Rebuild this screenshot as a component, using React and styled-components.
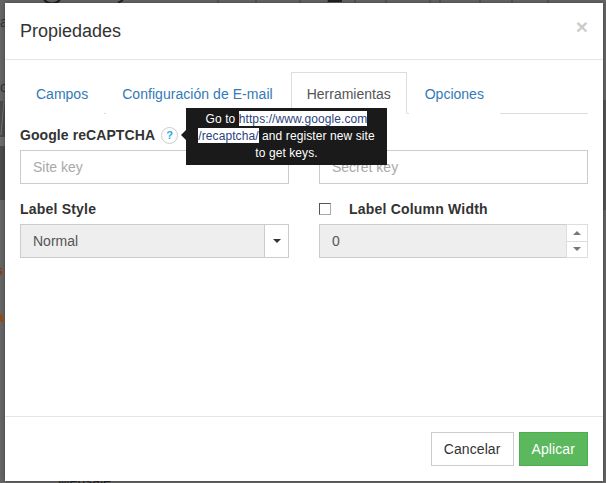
import React from "react";
import styled, { createGlobalStyle } from "styled-components";

const Global = createGlobalStyle`
  html, body { margin: 0; padding: 0; background: #666; }
  body { font-family: "Liberation Sans", Arial, sans-serif; font-size: 14px; color: #333; }
  * { box-sizing: border-box; }
`;

const Backdrop = styled.div`
  position: relative;
  width: 606px;
  height: 483px;
  overflow: hidden;
  padding: 3px 3px 2px 5px;
  background: #666;
`;

const BehindDrawing = styled.svg`
  position: absolute;
  left: 0;
  top: 0;
  width: 606px;
  height: 483px;
`;

const BehindText = styled.span`
  position: absolute;
  left: ${(p) => p.$x}px;
  top: ${(p) => p.$y}px;
  color: ${(p) => p.$color};
  font-size: 14px;
  font-weight: ${(p) => (p.$bold ? 700 : 400)};
  line-height: 16px;
`;

const Modal = styled.div`
  position: relative;
  width: 598px;
  height: 478px;
  display: flex;
  flex-direction: column;
  background: #fff;
  box-shadow: 0 0 5px rgba(0, 0, 0, 0.35);
`;

const Header = styled.div`
  height: 57px;
  flex: none;
  display: flex;
  align-items: center;
  justify-content: space-between;
  padding: 0 15px;
  border-bottom: 1px solid #e5e5e5;
`;

const Title = styled.h4`
  margin: 0;
  font-size: 18px;
  font-weight: 400;
  line-height: 20px;
  color: #333;
`;

const Close = styled.span`
  font-size: 21px;
  font-weight: 700;
  line-height: 1;
  color: #000;
  opacity: 0.2;
  margin: -10px 0 0;
`;

const Body = styled.div`
  flex: 1;
  padding: 12px 15px 0;
`;

const Tabs = styled.div`
  display: flex;
  height: 42px;
  border-bottom: 1px solid #ddd;
`;

const Tab = styled.div`
  height: 42px;
  padding: 0 15px;
  margin-right: 2px;
  line-height: 42px;
  letter-spacing: ${(p) => (p.$wide ? "0.05px" : "0")};
  color: ${(p) => (p.$active ? "#555" : "#337ab7")};
  background: #fff;
  border: 1px solid ${(p) => (p.$active ? "#ddd" : "transparent")};
  border-bottom-color: ${(p) => (p.$active ? "#fff" : "transparent")};
  white-space: nowrap;
`;

const Grid = styled.div`
  display: grid;
  grid-template-columns: 269px 269px;
  column-gap: 30px;
  row-gap: 15px;
  padding-top: 11px;
`;

const Field = styled.div`
  display: flex;
  flex-direction: column;
`;

const LabelRow = styled.div`
  position: relative;
  display: flex;
  align-items: center;
  height: 20px;
  margin-bottom: 5px;
`;

const Label = styled.label`
  font-weight: 700;
  font-size: 14px;
  line-height: 20px;
  color: #333;
  letter-spacing: ${(p) => (p.$tight ? "0.08px" : "0.2px")};
  white-space: nowrap;
`;

const Help = styled.span`
  width: 17px;
  height: 17px;
  margin-left: 6px;
  border: 1px solid #ccc;
  border-radius: 50%;
  display: flex;
  align-items: center;
  justify-content: center;
  font-size: 11px;
  font-weight: 700;
  color: #29abe2;
`;

const Tooltip = styled.div`
  position: absolute;
  left: 166px;
  top: -17px;
  z-index: 2;
  width: 201px;
  height: 57px;
  padding: 3px 6px;
  background: #1a1a1a;
  color: #fff;
  font-size: 12px;
  line-height: 17px;
  letter-spacing: 0.09px;
  text-align: center;

  &::before {
    content: "";
    position: absolute;
    left: -5px;
    top: 22px;
    border-style: solid;
    border-width: 5px 5px 5px 0;
    border-color: transparent #1a1a1a transparent transparent;
  }
`;

const Selected = styled.span`
  background: #fff;
  color: #2c3f80;
  padding-top: 1px;
`;

const Input = styled.div`
  height: 34px;
  padding: 0 12px;
  border: 1px solid #ccc;
  background: ${(p) => (p.$disabled ? "#eee" : "#fff")};
  color: ${(p) => (p.$disabled ? "#555" : "#a9a9a9")};
  line-height: 32px;
  font-size: 14px;
`;

const Group = styled.div`
  display: flex;
  height: 34px;
`;

const GroupInput = styled(Input)`
  flex: 1;
  border-right: none;
`;

const CaretButton = styled.div`
  width: 25px;
  border: 1px solid #ccc;
  background: #fff;
  display: flex;
  align-items: center;
  justify-content: center;

  &::after {
    content: "";
    border-style: solid;
    border-width: 4px 4px 0;
    border-color: #333 transparent transparent;
  }
`;

const Spinner = styled.div`
  width: 22px;
  display: flex;
  flex-direction: column;
  border: 1px solid #ddd;
`;

const SpinButton = styled.div`
  flex: 1;
  display: flex;
  align-items: center;
  justify-content: center;
  background: #fff;
  border-top: ${(p) => (p.$down ? "1px solid #ddd" : "none")};

  &::after {
    content: "";
    border-style: solid;
    border-width: ${(p) => (p.$down ? "4px 4px 0" : "0 4px 4px")};
    border-color: ${(p) =>
      p.$down
        ? "#777 transparent transparent"
        : "transparent transparent #777"};
  }
`;

const Check = styled.span`
  width: 12px;
  height: 12px;
  border: 1px solid #555;
  border-right-color: #aaa;
  border-bottom-color: #aaa;
  background: #fff;
  margin-right: 18px;
`;

const Footer = styled.div`
  height: 65px;
  flex: none;
  display: flex;
  justify-content: flex-end;
  align-items: flex-start;
  gap: 5px;
  padding: 15px 15px 0;
  border-top: 1px solid #e5e5e5;
`;

const Button = styled.div`
  height: 34px;
  padding: 0 12px;
  line-height: 32px;
  letter-spacing: 0.1px;
  border: 1px solid ${(p) => (p.$primary ? "#4cae4c" : "#ccc")};
  background: ${(p) => (p.$primary ? "#5cb85c" : "#fff")};
  color: ${(p) => (p.$primary ? "#fff" : "#333")};
`;

export default function App() {
  return (
    <>
      <Global />
      <Backdrop>
        <BehindDrawing viewBox="0 0 606 483" aria-hidden="true">
          <rect x="0" y="101" width="5" height="99" fill="#4c4c4c" />
          <rect x="0" y="137" width="5" height="9" fill="#6e6e6e" />
          <rect x="603" y="100" width="3" height="110" fill="#555" />
          <path d="M1 135 L4 101" stroke="#777" strokeWidth="1" />
          <path d="M44 0 Q52 7 60 0" stroke="#222" strokeWidth="2" fill="none" />
          <path d="M118 3 L123 0" stroke="#222" strokeWidth="2" />
          <path d="M218 0V3M256 0V3M300 0V3M328 0V3M355 0V3M386 0V3M430 0V3M440 0V3M480 0V3M512 0V3M548 0V3" stroke="#444" strokeWidth="1" />
          <rect x="328" y="0" width="14" height="2" fill="#222" />
        </BehindDrawing>
        <BehindText $x={0} $y={14} $color="#2c3640">a</BehindText>
        <BehindText $x={0} $y={79} $color="#2c3640">o</BehindText>
        <BehindText $x={-5} $y={262} $color="#8a3c10" $bold>s</BehindText>
        <BehindText $x={-4} $y={309} $color="#a04a00" $bold>a</BehindText>
        <BehindText $x={58} $y={473} $color="#222">Mensaje</BehindText>
        <Modal>
          <Header>
            <Title>Propiedades</Title>
            <Close>×</Close>
          </Header>
          <Body>
            <Tabs>
              <Tab>Campos</Tab>
              <Tab $wide>Configuración de E-mail</Tab>
              <Tab $active>Herramientas</Tab>
              <Tab>Opciones</Tab>
            </Tabs>
            <Grid>
              <Field>
                <LabelRow>
                  <Label $tight>Google reCAPTCHA</Label>
                  <Help>?</Help>
                  <Tooltip>
                    Go to <Selected>https://www.google.com</Selected>
                    <br />
                    <Selected>/recaptcha/</Selected> and register new site
                    <br />
                    to get keys.
                  </Tooltip>
                </LabelRow>
                <Input>Site key</Input>
              </Field>
              <Field>
                <LabelRow />
                <Input>Secret key</Input>
              </Field>
              <Field>
                <LabelRow>
                  <Label>Label Style</Label>
                </LabelRow>
                <Group>
                  <GroupInput $disabled>Normal</GroupInput>
                  <CaretButton />
                </Group>
              </Field>
              <Field>
                <LabelRow>
                  <Check />
                  <Label>Label Column Width</Label>
                </LabelRow>
                <Group>
                  <GroupInput $disabled>0</GroupInput>
                  <Spinner>
                    <SpinButton />
                    <SpinButton $down />
                  </Spinner>
                </Group>
              </Field>
            </Grid>
          </Body>
          <Footer>
            <Button>Cancelar</Button>
            <Button $primary>Aplicar</Button>
          </Footer>
        </Modal>
      </Backdrop>
    </>
  );
}
